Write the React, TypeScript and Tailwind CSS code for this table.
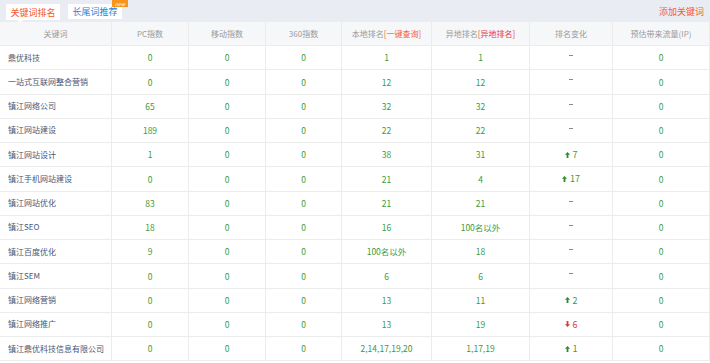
import React from "react";

type Row = { k: string; pc: string; m: string; s: string; local: string; remote: string; ch: null | { dir: "up" | "down"; n: string }; ip: string };

const rows: Row[] = [
  { k: "鼎优科技", pc: "0", m: "0", s: "0", local: "1", remote: "1", ch: null, ip: "0" },
  { k: "一站式互联网整合营销", pc: "0", m: "0", s: "0", local: "12", remote: "12", ch: null, ip: "0" },
  { k: "镇江网络公司", pc: "65", m: "0", s: "0", local: "32", remote: "32", ch: null, ip: "0" },
  { k: "镇江网站建设", pc: "189", m: "0", s: "0", local: "22", remote: "22", ch: null, ip: "0" },
  { k: "镇江网站设计", pc: "1", m: "0", s: "0", local: "38", remote: "31", ch: { dir: "up", n: "7" }, ip: "0" },
  { k: "镇江手机网站建设", pc: "0", m: "0", s: "0", local: "21", remote: "4", ch: { dir: "up", n: "17" }, ip: "0" },
  { k: "镇江网站优化", pc: "83", m: "0", s: "0", local: "21", remote: "21", ch: null, ip: "0" },
  { k: "镇江SEO", pc: "18", m: "0", s: "0", local: "16", remote: "100名以外", ch: null, ip: "0" },
  { k: "镇江百度优化", pc: "9", m: "0", s: "0", local: "100名以外", remote: "18", ch: null, ip: "0" },
  { k: "镇江SEM", pc: "0", m: "0", s: "0", local: "6", remote: "6", ch: null, ip: "0" },
  { k: "镇江网络营销", pc: "0", m: "0", s: "0", local: "13", remote: "11", ch: { dir: "up", n: "2" }, ip: "0" },
  { k: "镇江网络推广", pc: "0", m: "0", s: "0", local: "13", remote: "19", ch: { dir: "down", n: "6" }, ip: "0" },
  { k: "镇江鼎优科技信息有限公司", pc: "0", m: "0", s: "0", local: "2,14,17,19,20", remote: "1,17,19", ch: { dir: "up", n: "1" }, ip: "0" },
];

const grid = "grid grid-cols-[112px_77px_77px_76px_90px_98px_83px_97px]";
const cell = "flex items-center justify-center border-r border-[#ececec]";

function Arrow({ dir }: { dir: "up" | "down" }) {
  const color = dir === "up" ? "#2e8b2e" : "#d93a3a";
  return (
    <svg width="5" height="6" viewBox="0 0 5 6" className="mr-[3px]">
      {dir === "up" ? (
        <path d="M2.5 0 L5 2.8 L3.4 2.8 L3.4 6 L1.6 6 L1.6 2.8 L0 2.8 Z" fill={color} />
      ) : (
        <path d="M2.5 6 L5 3.2 L3.4 3.2 L3.4 0 L1.6 0 L1.6 3.2 L0 3.2 Z" fill={color} />
      )}
    </svg>
  );
}

export default function App() {
  return (
    <div
      className="w-[710px] h-[363px] overflow-hidden bg-white text-[8px] leading-none"
      style={{ fontFamily: '"Noto Sans CJK SC", "Noto Sans", sans-serif' }}
    >
      <div className="h-[22px] bg-[#e9edf3] flex items-start relative">
        <div className="relative ml-[6px] mt-[4px] w-[54px] h-[16px] bg-white flex items-center justify-center text-[#f4552b] text-[9px]">
          关键词排名
          <div className="absolute left-[11px] -bottom-[3px] w-0 h-0 border-l-[3px] border-r-[3px] border-t-[3px] border-l-transparent border-r-transparent border-t-white"></div>
        </div>
        <div className="relative ml-[8px] mt-[4px] w-[54px] h-[15px] bg-white flex items-center justify-center text-[#2a86d6] text-[9px]">
          长尾词推荐
          <div className="absolute -right-[6px] -top-[4px] w-[16px] h-[7px] bg-[#f7941d] text-white text-[5px] flex items-center justify-center italic">
            new
          </div>
        </div>
        <div className="ml-auto mr-[6px] mt-[7px] text-[#f4602c] text-[9px]">添加关键词</div>
      </div>
      <div className={`${grid} h-[24px] bg-[#f6f7f9] border-b border-[#ececec] text-[#9a9a9a]`}>
        <div className={cell}>关键词</div>
        <div className={cell}>PC指数</div>
        <div className={cell}>移动指数</div>
        <div className={cell}>360指数</div>
        <div className={cell}>
          本地排名<span className="text-[#f4602c]">[一键查询]</span>
        </div>
        <div className={cell}>
          异地排名<span className="text-[#e8383c]">[异地排名]</span>
        </div>
        <div className={cell}>排名变化</div>
        <div className={cell}>预估带来流量(IP)</div>
      </div>
      {rows.map((r, i) => (
        <div key={i} className={`${grid} h-[24.25px] border-b border-[#ececec] text-[#3c9a3c] text-[8.5px]`}>
          <div className={`${cell} !justify-start pl-[8px] text-[#4a5572] text-[8px]`}>{r.k}</div>
          <div className={cell}>{r.pc}</div>
          <div className={cell}>{r.m}</div>
          <div className={cell}>{r.s}</div>
          <div className={cell}>{r.local}</div>
          <div className={cell}>{r.remote}</div>
          <div className={cell}>
            {r.ch ? (
              <span className={`flex items-center ${r.ch.dir === "up" ? "text-[#3c9a3c]" : "text-[#e23b3b]"} text-[9px]`}>
                <Arrow dir={r.ch.dir} />
                {r.ch.n}
              </span>
            ) : (
              <span className="block w-[4px] h-[1px] bg-[#8a8a8a] -mt-[4px]"></span>
            )}
          </div>
          <div className={cell}>{r.ip}</div>
        </div>
      ))}
    </div>
  );
}
